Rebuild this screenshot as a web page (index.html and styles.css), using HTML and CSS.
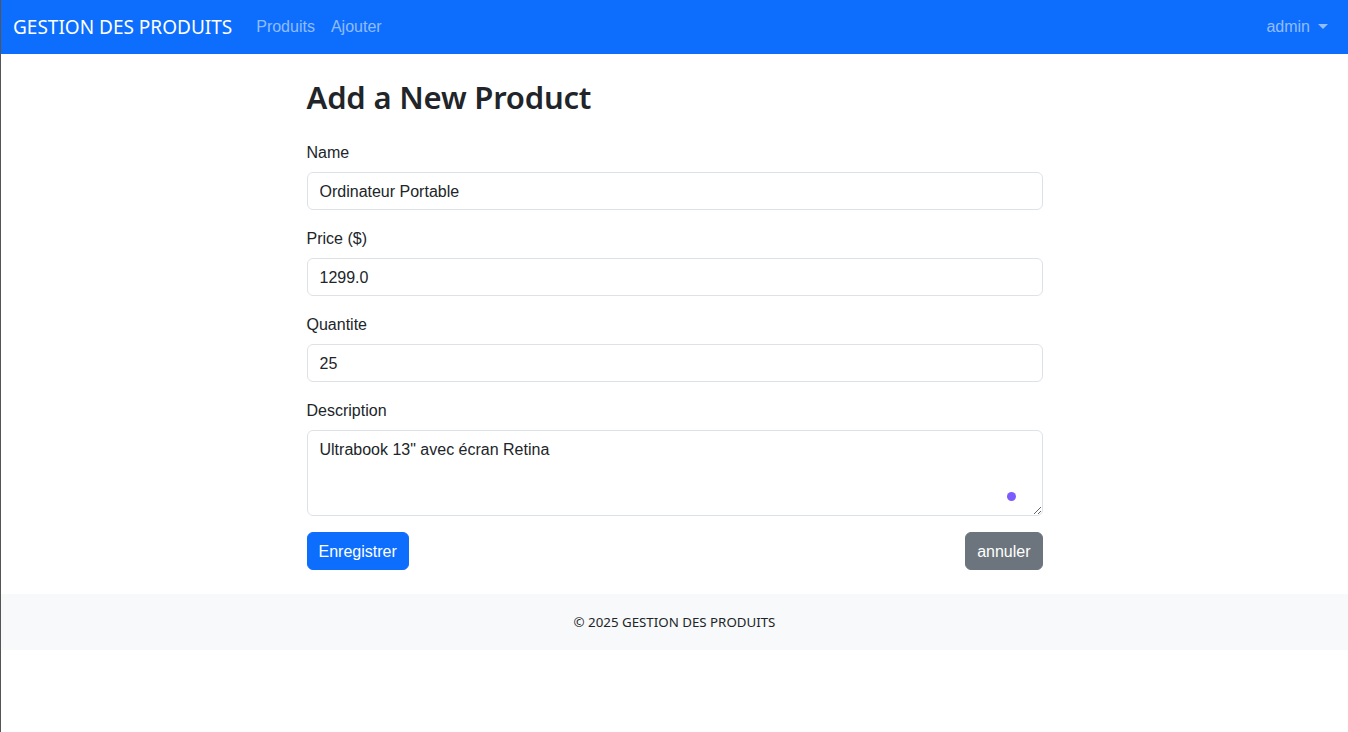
FILE: index.html
```html
<!DOCTYPE html>
<html lang="fr">
<head>
<meta charset="utf-8">
<title>Add a New Product</title>
<link rel="stylesheet" href="styles.css">
</head>
<body>
<nav class="navbar">
  <div class="nav-inner">
    <a class="brand" href="#">GESTION DES PRODUITS</a>
    <ul class="nav-links">
      <li><a href="#">Produits</a></li>
      <li><a href="#">Ajouter</a></li>
    </ul>
    <div class="nav-right">
      <a href="#" class="dropdown">admin<span class="caret"></span></a>
    </div>
  </div>
</nav>
<main class="container">
  <div class="col">
    <h2 class="title">Add a New Product</h2>
    <form class="form">
      <div class="group">
        <label class="label">Name</label>
        <input class="control" type="text" value="Ordinateur Portable">
      </div>
      <div class="group">
        <label class="label">Price ($)</label>
        <input class="control" type="text" value="1299.0">
      </div>
      <div class="group">
        <label class="label">Quantite</label>
        <input class="control" type="text" value="25">
      </div>
      <div class="group">
        <label class="label">Description</label>
        <div class="ta-wrap">
          <textarea class="control textarea" rows="3">Ultrabook 13" avec écran Retina</textarea>
          <span class="ext-dot"></span>
        </div>
      </div>
      <div class="actions">
        <button type="button" class="btn btn-primary">Enregistrer</button>
        <button type="button" class="btn btn-secondary">annuler</button>
      </div>
    </form>
  </div>
</main>
<footer class="footer">
  <span class="small">© 2025 GESTION DES PRODUITS</span>
</footer>
</body>
</html>
```

FILE: styles.css
```css
* { box-sizing: border-box; }
html, body { margin: 0; padding: 0; }
body {
  font-family: "Liberation Sans", Arial, sans-serif;
  font-size: 16px;
  line-height: 1.5;
  color: #212529;
  background: #fff;
  border-left: 1px solid #555;
  min-height: 732px;
}
a { text-decoration: none; }

.navbar {
  background: #0d6efd;
  height: 54px;
}
.nav-inner {
  display: flex;
  align-items: center;
  height: 100%;
  padding: 0 12px;
}
.brand {
  color: #fff;
  font-family: "Noto Sans", "Liberation Sans", sans-serif;
  font-size: 19px;
  line-height: 30px;
  margin-right: 16px;
}
.nav-links {
  display: flex;
  list-style: none;
  margin: 0;
  padding: 0;
}
.nav-links a, .dropdown {
  display: block;
  padding: 8px;
  color: rgba(255,255,255,.55);
}
.nav-right { margin-left: auto; }
.caret {
  display: inline-block;
  margin-left: 8px;
  vertical-align: 3px;
  border-top: 5px solid rgba(255,255,255,.55);
  border-left: 5px solid transparent;
  border-right: 5px solid transparent;
}

.container {
  max-width: 1140px;
  margin: 0 auto;
  padding: 0 12px;
}
.col {
  width: 736px;
  margin-left: 190px;
}
.title {
  margin: 24px 0 24px;
  font-family: "Noto Sans", "Liberation Sans", sans-serif;
  font-size: 31px;
  font-weight: 600;
  line-height: 38.4px;
  letter-spacing: -0.2px;
}
.group { margin-bottom: 16px; }
.label {
  display: block;
  margin-bottom: 8px;
  padding-top: 1px;
  height: 24px;
}
.control {
  display: block;
  width: 100%;
  padding: 7px 12px 5px;
  font: inherit;
  color: #212529;
  background: #fff;
  border: 1px solid #dee2e6;
  border-radius: 6px;
  line-height: 1.5;
  outline: none;
}
.ta-wrap { position: relative; }
.textarea {
  height: 86px;
  resize: vertical;
}
.ext-dot {
  position: absolute;
  left: 700px;
  top: 62px;
  width: 9px;
  height: 9px;
  border-radius: 50%;
  background: #7c5cff;
}
.actions {
  display: flex;
  justify-content: space-between;
}
.btn {
  font: inherit;
  line-height: 1.5;
  padding: 7px 11px 5px;
  border-radius: 6px;
  border: 1px solid transparent;
  color: #fff;
}
.btn-primary { background: #0d6efd; border-color: #0d6efd; }
.btn-secondary { background: #6c757d; border-color: #6c757d; }

.footer {
  margin-top: 24px;
  background: #f8f9fa;
  padding: 16px 0;
  text-align: center;
}
.small {
  font-family: "Noto Sans", "Liberation Sans", sans-serif;
  font-size: 13.3px;
  line-height: 24px;
}
```
